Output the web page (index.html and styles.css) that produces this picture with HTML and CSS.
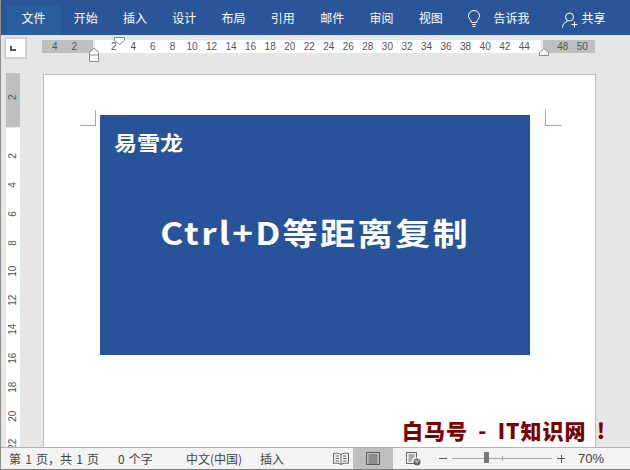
FILE: index.html
```html
<!DOCTYPE html>
<html lang="zh-CN">
<head>
    <meta charset="UTF-8">
    <title>Word</title>
    <link rel="stylesheet" href="styles.css">
</head>
<body>
    <div class="window">
        <div class="tabs">
            <div class="tab file-tab">文件</div>
            <div class="tab">开始</div>
            <div class="tab">插入</div>
            <div class="tab">设计</div>
            <div class="tab">布局</div>
            <div class="tab">引用</div>
            <div class="tab">邮件</div>
            <div class="tab">审阅</div>
            <div class="tab">视图</div>
            <svg class="lamp" width="14" height="18" viewBox="0 0 14 18" fill="none" stroke="#fff" stroke-width="1">
                <path d="M4.5 12.5C4.5 10 1.5 9 1.5 6a5.5 5.5 0 0 1 11 0c0 3-3 4-3 6.500z"/>
                <path d="M5 14.500h4M5.500 16.500h3"/>
            </svg>
            <div class="tell">告诉我</div>
            <svg class="user" width="16" height="16" viewBox="0 0 16 16" fill="none" stroke="#fff" stroke-width="1">
                <circle cx="7.500" cy="5" r="4"/>
                <path d="M0.500 15.500c0-3.500 2.500-5.500 5-6M12.500 9.500v6M9.500 12.500h6"/>
            </svg>
            <div class="share">共享</div>
        </div>

        <div class="ruler-row">
            <div class="corner"><span class="corner-mark"></span></div>
            <div class="h-ruler">
                <div class="h-seg h-grey left-seg"><span>4</span><span>2</span></div>
                <div class="h-seg h-white">
                    <span>2</span><span>4</span><span>6</span><span>8</span><span>10</span><span>12</span>
                    <span>14</span><span>16</span><span>18</span><span>20</span><span>22</span><span>24</span>
                    <span>26</span><span>28</span><span>30</span><span>32</span><span>34</span><span>36</span>
                    <span>38</span><span>40</span><span>42</span><span>44</span>
                </div>
                <div class="h-seg h-grey right-seg"><span>48</span><span>50</span></div>
                <svg class="marker first-indent" width="13" height="8" viewBox="0 0 13 8"><path d="M1.500.5h10v3l-5 4-5-4z" fill="#fff" stroke="#8a8a8a"/></svg>
                <svg class="marker left-indent" width="10" height="15" viewBox="0 0 10 15"><path d="M.5 14.500v-9l4.500-4.500 4.500 4.500v9zM.5 8h9" fill="#fff" stroke="#8a8a8a"/></svg>
                <svg class="marker right-indent" width="10" height="8" viewBox="0 0 10 8"><path d="M.5 7.500v-3l4.500-4 4.500 4v3z" fill="#fff" stroke="#8a8a8a"/></svg>
            </div>
        </div>

        <div class="doc-row">
            <div class="v-ruler">
                <div class="v-grey"><span>2</span></div>
                <div class="v-white">
                    <span>2</span><span>4</span><span>6</span><span>8</span><span>10</span><span>12</span>
                    <span>14</span><span>16</span><span>18</span><span>20</span><span>22</span>
                </div>
            </div>
            <div class="page">
                <span class="crop crop-left"></span>
                <span class="crop crop-right"></span>
                <div class="slide">
                    <div class="slide-logo">易雪龙</div>
                    <div class="slide-title">Ctrl+D等距离复制</div>
                </div>
            </div>
        </div>

        <div class="statusbar">
            <span class="st-pages">第 1 页，共 1 页</span>
            <span class="st-words">0 个字</span>
            <span class="st-lang">中文(中国)</span>
            <span class="st-mode">插入</span>
            <div class="st-views">
                <svg width="16" height="13" viewBox="0 0 16 13" fill="none" stroke="#666"><path d="M8 2.500C6 1 3 1 .5 1.500v10c2.500-.5 5.500-.5 7.500 1 2-1.500 5-1.500 7.500-1v-10C13 1 10 1 8 2.500zM8 2.500v10M2.500 4h3.500M2.500 6.500h3.500M2.500 9h3.500M10 4h3.500M10 6.500h3.500M10 9h3.500"/></svg>
                <div class="view-on">
                    <svg width="14" height="13" viewBox="0 0 14 13" fill="none" stroke="#5a5a5a"><path d="M.5.5h13v12H.5zM2.500 3h9M2.500 5h9M2.500 7h9M2.500 9h9M2.500 11h9"/></svg>
                </div>
                <svg class="web-view" width="15" height="14" viewBox="0 0 15 14" fill="none" stroke="#666"><path d="M8 11.500H.5V.5h10v5M2.500 3h6M2.500 5h6M2.500 7h4M2.500 9h3"/><circle cx="11" cy="10" r="3.500" fill="#666" stroke="none"/><path d="M9 9h2v2M12 8l1 1" stroke="#f3f3f3"/></svg>
            </div>
            <div class="zoom">
                <span class="zoom-minus"></span>
                <div class="slider"><span class="thumb"></span><span class="tick"></span></div>
                <span class="zoom-plus"></span>
            </div>
            <span class="st-percent">70%</span>
        </div>

        <div class="watermark">白马号 - IT知识网 !</div>
    </div>
</body>
</html>
```

FILE: styles.css
```css
* {
    box-sizing: border-box;
}

body {
    margin: 0;
    font-family: "Noto Sans CJK SC", "Liberation Sans", sans-serif;
    background-color: #e6e6e6;
}

.window {
    position: relative;
    width: 630px;
    height: 470px;
    display: flex;
    flex-direction: column;
    overflow: hidden;
    background-color: #e6e6e6;
    border-left: 1px solid #8c8c8c;
}

/* title tabs */
.tabs {
    height: 35px;
    flex: none;
    display: flex;
    align-items: flex-end;
    padding-left: 5px;
    background-color: #2a5599;
    color: white;
    font-size: 12px;
}

.tab {
    width: 49.3px;
    height: 30px;
    line-height: 26px;
    text-align: center;
}

.file-tab {
    width: 55px;
    background-color: #2b5e9f;
}

.lamp {
    margin: 0 0 7px 12px;
}

.tell {
    margin-left: 12px;
    height: 30px;
    line-height: 26px;
}

.user {
    margin: 0 0 7px 33px;
}

.share {
    margin-left: 3px;
    height: 30px;
    line-height: 26px;
}

/* rulers */
.ruler-row {
    height: 38px;
    flex: none;
    display: flex;
    padding: 2px 0 0 3px;
}

.corner {
    width: 23px;
    height: 22px;
    border: 2px solid #d6cfcf;
    background-color: white;
    position: relative;
}

.corner-mark {
    position: absolute;
    left: 4px;
    top: 7px;
    width: 6px;
    height: 5px;
    border-left: 2px solid #555;
    border-bottom: 2px solid #555;
}

.h-ruler {
    position: relative;
    display: flex;
    margin: 3px 0 0 15px;
    height: 13px;
}

.h-seg {
    display: flex;
    height: 13px;
    font: 10px/13px "Liberation Sans", sans-serif;
    color: #555;
}

.h-seg span {
    width: 19.55px;
    flex: none;
    text-align: center;
}

.h-grey {
    background-color: #bfbfbf;
}

.left-seg {
    width: 51px;
    padding-left: 3px;
    margin-right: 2px;
}

.h-white {
    width: 446px;
    padding-left: 9px;
    background-color: white;
}

.right-seg {
    width: 52px;
    margin-left: 2px;
    padding-left: 10px;
}

.marker {
    position: absolute;
}

.first-indent {
    left: 71px;
    top: -3px;
}

.left-indent {
    left: 47px;
    top: 7px;
}

.right-indent {
    left: 497px;
    top: 8px;
}

.doc-row {
    flex: 1;
    min-height: 0;
    display: flex;
    padding-left: 5px;
}

.v-ruler {
    width: 14px;
    flex: none;
    font: 10px/14px "Liberation Sans", sans-serif;
    color: #555;
}

.v-ruler span {
    display: block;
    writing-mode: vertical-rl;
    transform: rotate(180deg);
    text-align: center;
    width: 14px;
}

.v-grey {
    height: 54px;
    margin-bottom: 1px;
    padding-top: 12px;
    background-color: #bfbfbf;
}

.v-grey span {
    height: 24px;
}

.v-white {
    height: 320px;
    overflow: hidden;
    padding-top: 14px;
    background-color: white;
}

.v-white span {
    height: 28.85px;
}

.page {
    position: relative;
    width: 553px;
    height: 400px;
    margin: 1px 0 0 23px;
    padding: 40px 0 0 56px;
    background-color: white;
    border: 1px solid #bcbcbc;
}

.crop {
    position: absolute;
    top: 35px;
    width: 16px;
    height: 16px;
    border-bottom: 1px solid #a6a6a6;
}

.crop-left {
    left: 36px;
    border-right: 1px solid #a6a6a6;
}

.crop-right {
    left: 501px;
    border-left: 1px solid #a6a6a6;
}

.slide {
    width: 430px;
    height: 240px;
    display: flex;
    flex-direction: column;
    background-color: #28539b;
    color: white;
    font-weight: 700;
}

.slide-logo {
    margin: 15px 0 0 14px;
    width: 60px;
    font-size: 20px;
    line-height: 26px;
    white-space: nowrap;
    transform: scaleX(1.15);
    transform-origin: left center;
}

.slide-title {
    margin-top: 54px;
    text-align: center;
    font-size: 31px;
    line-height: 44px;
    letter-spacing: 2px;
    white-space: nowrap;
    transform: scaleX(1.135);
}

/* status bar */
.statusbar {
    position: absolute;
    left: 0;
    right: 0;
    bottom: 0;
    height: 23px;
    display: flex;
    align-items: center;
    font-size: 12px;
    word-spacing: 1.5px;
    color: #444;
    background-color: #f3f3f3;
    border-top: 1px solid #b4b4b4;
    border-bottom: 1px solid #808080;
}

.st-pages {
    margin-left: 8px;
    width: 109px;
    white-space: nowrap;
}

.st-words {
    width: 68px;
}

.st-lang {
    width: 74px;
}

.st-mode {
    width: 47px;
}

.st-views {
    display: flex;
    align-items: center;
    height: 21px;
    margin-left: 26px;
}

.view-on {
    width: 40px;
    height: 21px;
    margin-left: 4px;
    display: flex;
    align-items: center;
    justify-content: center;
    background-color: #bfbfbf;
}

.web-view {
    margin-left: 13px;
}

.zoom {
    display: flex;
    align-items: center;
    margin-left: 18px;
}

.zoom-minus {
    width: 8px;
    height: 1px;
    background-color: #555;
}

.slider {
    position: relative;
    width: 100px;
    height: 1px;
    margin: 0 5px;
    background-color: #a8a8a8;
}

.thumb {
    position: absolute;
    left: 32px;
    top: -6px;
    width: 5px;
    height: 11px;
    background-color: #777;
}

.tick {
    position: absolute;
    left: 50px;
    top: -2px;
    width: 1px;
    height: 5px;
    background-color: #a8a8a8;
}

.zoom-plus {
    position: relative;
    width: 8px;
    height: 1px;
    background-color: #555;
}

.zoom-plus::after {
    content: "";
    position: absolute;
    left: 3.500px;
    top: -3.500px;
    width: 1px;
    height: 8px;
    background-color: #555;
}

.st-percent {
    margin-left: 13px;
    font: 13px "Liberation Sans", sans-serif;
}

.watermark {
    position: absolute;
    left: 401px;
    top: 416px;
    font-size: 21px;
    line-height: 28px;
    font-weight: 900;
    letter-spacing: 1px;
    word-spacing: 4.5px;
    color: #7b0000;
    white-space: nowrap;
}
```
